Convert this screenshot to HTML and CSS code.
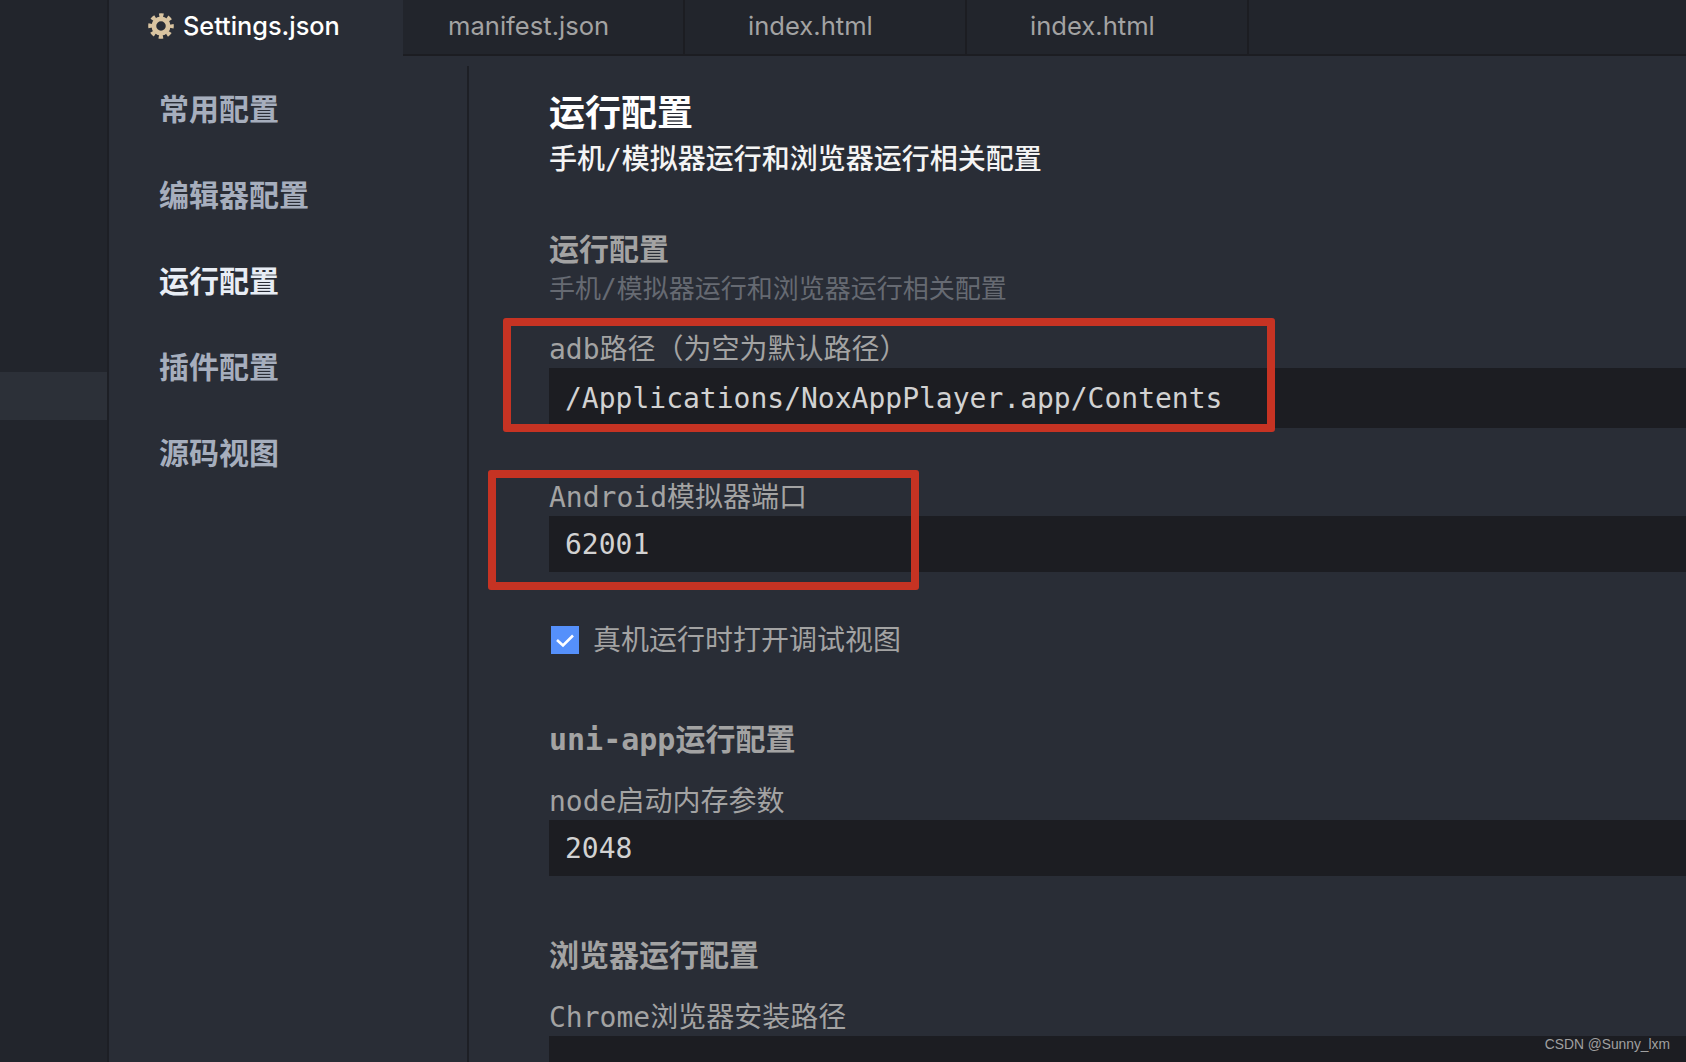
FILE: index.html
```html
<!DOCTYPE html>
<html lang="en">
<head>
    <meta charset="UTF-8">
    <title>Settings.json</title>
    <link rel="stylesheet" href="styles.css">
</head>
<body>
    <div class="activity">
        <div class="activity-item"></div>
    </div>
    <div class="workspace">
        <div class="tabs">
            <div class="tab active">
                <svg class="gear" viewBox="0 0 24 24" width="26" height="26">
                    <circle cx="12" cy="12" r="6.6" fill="none" stroke="#d9c4a1" stroke-width="4.4"/>
                    <circle cx="12" cy="12" r="10" fill="none" stroke="#d9c4a1" stroke-width="3.6" stroke-dasharray="4 3.854" stroke-dashoffset="2"/>
                </svg>
                <span>Settings.json</span>
            </div>
            <div class="tab first">manifest.json</div>
            <div class="tab">index.html</div>
            <div class="tab">index.html</div>
        </div>
        <div class="body">
            <div class="nav">
                <div class="nav-item">常用配置</div>
                <div class="nav-item">编辑器配置</div>
                <div class="nav-item current">运行配置</div>
                <div class="nav-item">插件配置</div>
                <div class="nav-item">源码视图</div>
            </div>
            <div class="content">
                <h1>运行配置</h1>
                <p class="subtitle">手机/模拟器运行和浏览器运行相关配置</p>

                <h2 class="first-section">运行配置</h2>
                <p class="desc">手机/模拟器运行和浏览器运行相关配置</p>
                <div class="field">
                    <label>adb路径（为空为默认路径）</label>
                    <div class="input tall">/Applications/NoxAppPlayer.app/Contents</div>
                </div>
                <div class="field">
                    <label>Android模拟器端口</label>
                    <div class="input">62001</div>
                </div>
                <div class="check">
                    <span class="box">
                        <svg viewBox="0 0 28 28" width="28" height="28">
                            <path d="M6 14 L12 19.5 L22 9.5" fill="none" stroke="#fff" stroke-width="2.6"/>
                        </svg>
                    </span>
                    <span class="check-text">真机运行时打开调试视图</span>
                </div>

                <h2 class="app-section">uni-app运行配置</h2>
                <div class="field">
                    <label>node启动内存参数</label>
                    <div class="input">2048</div>
                </div>

                <h2 class="browser-section">浏览器运行配置</h2>
                <div class="field last">
                    <label>Chrome浏览器安装路径</label>
                    <div class="input cut"></div>
                </div>
            </div>
        </div>
    </div>
    <div class="mark mark-adb"></div>
    <div class="mark mark-port"></div>
    <div class="watermark">CSDN @Sunny_lxm</div>
</body>
</html>
```

FILE: styles.css
```css
* {
    box-sizing: border-box;
}
html, body {
    margin: 0;
    height: 1062px;
    overflow: hidden;
}
body {
    display: flex;
    position: relative;
    background-color: #292d36;
    color: #a3a3a3;
    font-family: "DejaVu Sans Mono", "Noto Sans CJK SC", monospace;
    font-size: 28px;
}

.activity {
    width: 109px;
    flex-shrink: 0;
    padding-top: 372px;
    background-color: #22252c;
    border-right: 2px solid #1d1f25;
}
.activity-item {
    height: 48px;
    background-color: #2c3038;
}

.workspace {
    flex: 1;
    min-width: 0;
}
.tabs {
    display: flex;
    height: 56px;
    background-color: #22252c;
    border-bottom: 2px solid #1c1d22;
    font-family: Inter, "Noto Sans", sans-serif;
    font-size: 25.6px;
}
.tab {
    width: 282px;
    padding-left: 63px;
    line-height: 52px;
    color: #a3a3a3;
    border-right: 2px solid #1c1d22;
}
.tab.first {
    padding-left: 45px;
}
.tab.active {
    display: flex;
    align-items: center;
    gap: 9px;
    width: 294px;
    height: 56px;
    padding: 0 0 4px 39px;
    font-size: 25.3px;
    font-weight: 500;
    color: #fff;
    background-color: #292d36;
    border-right: 0;
}

.body {
    display: flex;
    height: 1006px;
    overflow: hidden;
}
.nav {
    width: 360px;
    flex-shrink: 0;
    margin-top: 10px;
    padding-left: 50px;
    border-right: 2px solid #1d1f25;
}
.nav-item {
    height: 86px;
    line-height: 82px;
    font-family: "Noto Sans CJK SC", sans-serif;
    font-size: 30px;
    font-weight: 700;
    color: #a6aebd;
}
.nav-item.current {
    color: #e8edf5;
}

.content {
    flex: 1;
    min-width: 0;
    padding: 32px 0 0 80px;
}
h1 {
    margin: 0;
    font-family: "Noto Sans CJK SC", sans-serif;
    font-size: 36px;
    line-height: 44px;
    font-weight: 700;
    color: #fff;
}
.subtitle {
    height: 40px;
    margin: 4px 0 0;
    font-size: 28px;
    line-height: 47px;
    font-weight: 500;
    color: #f4f4f4;
}
h2 {
    margin: 0;
    font-size: 30px;
    line-height: 40px;
    font-weight: 700;
    color: #a3a3a3;
}
.first-section {
    margin-top: 54px;
}
.app-section {
    margin-top: 66px;
}
.browser-section {
    margin-top: 60px;
}
.desc {
    height: 36px;
    margin: 0 0 22px;
    font-size: 26px;
    line-height: 39px;
    color: #666a72;
}
.field {
    margin-bottom: 48px;
}
.app-section + .field,
.browser-section + .field {
    margin-top: 20px;
}
.app-section + .field,
.field.last {
    margin-bottom: 0;
}
label {
    display: block;
    height: 40px;
    line-height: 43px;
}
.input {
    height: 56px;
    padding-left: 16px;
    line-height: 58px;
    background-color: #1c1d22;
    color: #d2d2d2;
}
.input.tall {
    height: 60px;
    line-height: 62px;
}
.input.cut {
    height: 30px;
}
.check {
    display: flex;
    align-items: center;
    gap: 14px;
    height: 28px;
}
.field + .check {
    margin-top: 54px;
}
.check-text {
    margin-bottom: 4px;
}
.box {
    width: 28px;
    height: 28px;
    margin-left: 2px;
    background-color: #5590fb;
}
.box svg {
    display: block;
}

.mark {
    position: absolute;
    border: 8px solid #c63323;
    border-radius: 3px;
}
.mark-adb {
    left: 503px;
    top: 318px;
    width: 772px;
    height: 114px;
}
.mark-port {
    left: 488px;
    top: 470px;
    width: 431px;
    height: 120px;
}
.watermark {
    position: absolute;
    right: 16px;
    bottom: 10px;
    font-family: "Liberation Sans", sans-serif;
    font-size: 13.8px;
    color: #a0a0a0;
}
```
